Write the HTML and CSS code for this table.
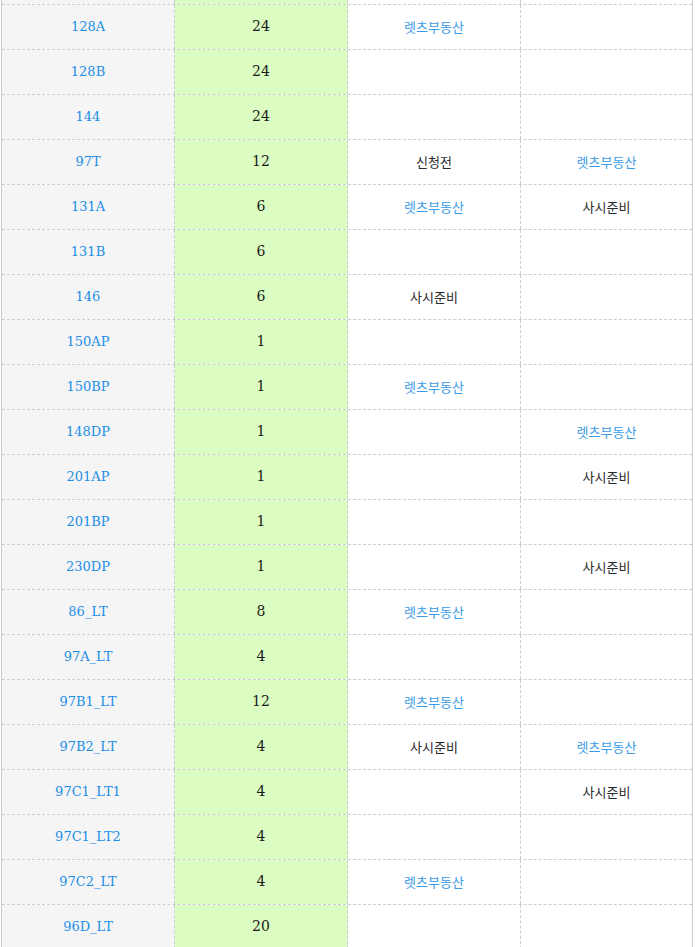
FILE: index.html
```html
<!DOCTYPE html>
<html lang="ko">
<head>
<meta charset="utf-8">
<title>Table</title>
<link rel="stylesheet" href="styles.css">
</head>
<body>
<div class="grid">
  <div class="row top"><div class="c c1"></div><div class="c c2"></div><div class="c c3"></div><div class="c c4"></div></div>
  <div class="row"><div class="c c1 code">128A</div><div class="c c2 num">24</div><div class="c c3 ko blue">렛츠부동산</div><div class="c c4"></div></div>
  <div class="row"><div class="c c1 code">128B</div><div class="c c2 num">24</div><div class="c c3"></div><div class="c c4"></div></div>
  <div class="row"><div class="c c1 code">144</div><div class="c c2 num">24</div><div class="c c3"></div><div class="c c4"></div></div>
  <div class="row"><div class="c c1 code">97T</div><div class="c c2 num">12</div><div class="c c3 ko">신청전</div><div class="c c4 ko blue">렛츠부동산</div></div>
  <div class="row"><div class="c c1 code">131A</div><div class="c c2 num">6</div><div class="c c3 ko blue">렛츠부동산</div><div class="c c4 ko">사시준비</div></div>
  <div class="row"><div class="c c1 code">131B</div><div class="c c2 num">6</div><div class="c c3"></div><div class="c c4"></div></div>
  <div class="row"><div class="c c1 code">146</div><div class="c c2 num">6</div><div class="c c3 ko">사시준비</div><div class="c c4"></div></div>
  <div class="row"><div class="c c1 code">150AP</div><div class="c c2 num">1</div><div class="c c3"></div><div class="c c4"></div></div>
  <div class="row"><div class="c c1 code">150BP</div><div class="c c2 num">1</div><div class="c c3 ko blue">렛츠부동산</div><div class="c c4"></div></div>
  <div class="row"><div class="c c1 code">148DP</div><div class="c c2 num">1</div><div class="c c3"></div><div class="c c4 ko blue">렛츠부동산</div></div>
  <div class="row"><div class="c c1 code">201AP</div><div class="c c2 num">1</div><div class="c c3"></div><div class="c c4 ko">사시준비</div></div>
  <div class="row"><div class="c c1 code">201BP</div><div class="c c2 num">1</div><div class="c c3"></div><div class="c c4"></div></div>
  <div class="row"><div class="c c1 code">230DP</div><div class="c c2 num">1</div><div class="c c3"></div><div class="c c4 ko">사시준비</div></div>
  <div class="row"><div class="c c1 code">86_LT</div><div class="c c2 num">8</div><div class="c c3 ko blue">렛츠부동산</div><div class="c c4"></div></div>
  <div class="row"><div class="c c1 code">97A_LT</div><div class="c c2 num">4</div><div class="c c3"></div><div class="c c4"></div></div>
  <div class="row"><div class="c c1 code">97B1_LT</div><div class="c c2 num">12</div><div class="c c3 ko blue">렛츠부동산</div><div class="c c4"></div></div>
  <div class="row"><div class="c c1 code">97B2_LT</div><div class="c c2 num">4</div><div class="c c3 ko">사시준비</div><div class="c c4 ko blue">렛츠부동산</div></div>
  <div class="row"><div class="c c1 code">97C1_LT1</div><div class="c c2 num">4</div><div class="c c3"></div><div class="c c4 ko">사시준비</div></div>
  <div class="row"><div class="c c1 code">97C1_LT2</div><div class="c c2 num">4</div><div class="c c3"></div><div class="c c4"></div></div>
  <div class="row"><div class="c c1 code">97C2_LT</div><div class="c c2 num">4</div><div class="c c3 ko blue">렛츠부동산</div><div class="c c4"></div></div>
  <div class="row"><div class="c c1 code">96D_LT</div><div class="c c2 num">20</div><div class="c c3"></div><div class="c c4"></div></div>
</div>
</body>
</html>
```
FILE: styles.css
```css
html, body {
  margin: 0;
  padding: 0;
  background: #ffffff;
}
.grid {
  margin-left: 1px;
  width: 690px;
  border-left: 1px solid #cccccc;
  border-right: 1px solid #cccccc;
}
.row {
  display: grid;
  grid-template-columns: 173px 173px 173px 171px;
  height: 45px;
  border-top: 1px dashed #cccccc;
  box-sizing: border-box;
}
.row.top {
  height: 4px;
  border-top: none;
}
.c {
  display: flex;
  align-items: center;
  justify-content: center;
  box-sizing: border-box;
  padding-bottom: 2px;
}
.row.top .c { padding-bottom: 0; }
.c1, .c2, .c3 {
  border-right: 1px dashed #cccccc;
}
.c1 { background: #f5f5f5; }
.c2 { background: #dbfdc1; }
.c3, .c4 { background: #ffffff; }
.code, .num {
  font-family: "DejaVu Serif", serif;
}
.code {
  font-size: 13px;
  color: #1c8ee8;
}
.num {
  font-size: 14px;
  color: #1a1a1a;
}
.ko {
  font-family: "Noto Sans CJK KR", "Noto Sans", sans-serif;
  font-size: 13px;
  color: #2a2a2a;
}
.ko.blue { color: #3a9be6; }
```
